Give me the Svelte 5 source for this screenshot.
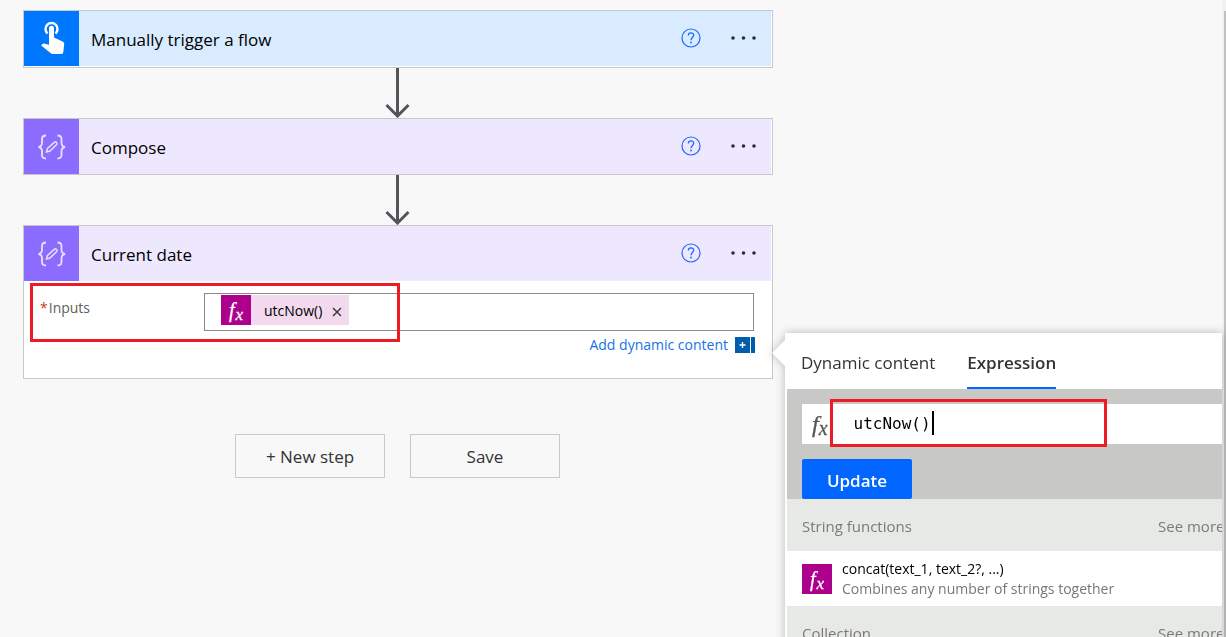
<script lang="ts">
  const steps = [
    { title: 'Manually trigger a flow', kind: 'trigger' },
    { title: 'Compose', kind: 'compose' },
    { title: 'Current date', kind: 'compose', open: true }
  ];

  const tabs = [
    { id: 'tab-dynamic', name: 'Dynamic content' },
    { id: 'tab-expression', name: 'Expression' }
  ];

  let tab = $state('tab-expression');
  let expression = $state('utcNow()');
  let token = $state('utcNow()');
</script>

{#snippet fx()}
  <span class="fx" aria-hidden="true">f<sub>x</sub></span>
{/snippet}

<div class="page">
  <main class="flow">
    {#each steps as step, i}
      {#if i > 0}
        <svg class="arrow" width="26" height="50" viewBox="0 0 26 50" aria-hidden="true">
          <path d="M12.500 0V48M1.500 37L12.500 48L23.500 37" fill="none" stroke="#54545a" stroke-width="3" />
        </svg>
      {/if}
      <section class="card" class:trigger={step.kind === 'trigger'}>
        <header>
          <span class="icon">
            {#if step.kind === 'trigger'}
              <svg width="26" height="36" viewBox="0 0 26 36" aria-hidden="true">
                <path d="M8.500 12.500A6 6 0 1 1 16.500 12.500" fill="none" stroke="#fff" stroke-width="2.400" />
                <path d="M12.500 4.800C14 4.800 15 6 15 7.300V16.500L23.500 20.500C24.900 21.200 25.300 22 25.200 23.500L24.300 31C24 32.500 23.400 33 22 33H14C13 33 12.200 32.700 11.500 32L2.200 24.500L3.200 23.200C3.900 22.500 4.800 22.500 5.700 22.700L10 23.800V7.300C10 6 11 4.800 12.500 4.800Z" fill="#fff" />
              </svg>
            {:else}
              <svg width="30" height="26" viewBox="0 0 30 26" fill="none" stroke="#e9e0ff" stroke-width="1.800" aria-hidden="true">
                <path d="M9 1.500C6 1.500 5 2.500 5 5V9C5 11.500 4 12.500 1.500 13C4 13.500 5 14.500 5 17V21C5 23.500 6 24.500 9 24.500" />
                <path d="M20.500 1.500C23.500 1.500 24.500 2.500 24.500 5V9C24.500 11.500 25.500 12.500 28 13C25.500 13.500 24.500 14.500 24.500 17V21C24.500 23.500 23.500 24.500 20.500 24.500" />
                <path d="M9.500 18L10.500 14.500L17.500 8.200C18.800 7.200 20.800 9 19.700 10.500L13 17L9.500 18Z" stroke-width="1.500" />
              </svg>
            {/if}
          </span>
          <h2>{step.title}</h2>
          <button class="help" aria-label="Help for {step.title}">
            <svg width="20" height="20" viewBox="0 0 20 20" fill="none" stroke="#2266ff" aria-hidden="true">
              <circle cx="10" cy="10" r="9" stroke-width="1.200" />
              <path d="M7.300 7.500C7.300 4 12.700 4 12.700 7.300C12.700 9.500 10 9.500 10 12.300" stroke-width="1.300" />
              <circle cx="10" cy="14.500" r=".9" fill="#2266ff" stroke="none" />
            </svg>
          </button>
          <button class="more" aria-label="More commands for {step.title}">
            <svg width="26" height="4" viewBox="0 0 26 4" fill="#2b2b33" aria-hidden="true">
              <circle cx="2" cy="2" r="1.800" /><circle cx="12.500" cy="2" r="1.800" /><circle cx="23" cy="2" r="1.800" />
            </svg>
          </button>
        </header>
        {#if step.open}
          <div class="body">
            <div class="field">
              <span class="label" id="inputs-label"><b>*</b>Inputs</span>
              <div class="box" role="group" aria-labelledby="inputs-label">
                {#if token}
                  <span class="token">
                    <span class="badge">{@render fx()}</span>
                    <span>{token}</span>
                    <button aria-label="Remove" onclick={() => (token = '')}>
                      <svg width="10" height="10" viewBox="0 0 10 10" aria-hidden="true">
                        <path d="M1 1L9 9M9 1L1 9" stroke="#333" stroke-width="1.400" />
                      </svg>
                    </button>
                  </span>
                {/if}
              </div>
            </div>
            <button class="add">
              Add dynamic content
              <svg width="20" height="16" viewBox="0 0 20 16" aria-hidden="true">
                <path d="M0 0H15V16H0ZM16 0H20V16H16Z" fill="#005dac" />
                <path d="M7.500 5V11M4.500 8H10.500" stroke="#fff" stroke-width="1.400" />
              </svg>
            </button>
            <div class="mark mark-inputs"></div>
          </div>
        {/if}
      </section>
    {/each}

    <div class="actions">
      <button>+ New step</button>
      <button>Save</button>
    </div>
  </main>

  <aside class="panel">
    <div class="tabs" role="tablist">
      {#each tabs as { id, name }}
        <button {id} role="tab" aria-selected={tab === id} class:active={tab === id} onclick={() => (tab = id)}>{name}</button>
      {/each}
    </div>
    <div class="editor">
      <div class="formula">
        {@render fx()}
        <div class="entry">
          <input aria-labelledby="tab-expression" spellcheck="false" bind:value={expression} />
          <span class="caret"></span>
        </div>
        <div class="mark mark-formula"></div>
      </div>
      <button class="update" onclick={() => (token = expression)}>Update</button>
    </div>
    <div class="group"><h3>String functions</h3><a href="#strings">See more</a></div>
    <button class="fn">
      <span class="badge">{@render fx()}</span>
      <span>
        <strong>concat(text_1, text_2?, ...)</strong>
        <small>Combines any number of strings together</small>
      </span>
    </button>
    <div class="group"><h3>Collection</h3><a href="#collection">See more</a></div>
  </aside>
  <div class="rail"><div class="thumb"></div></div>
</div>

<style>
  :global(body) { margin: 0; background: #f8f8f8; }

  .page {
    display: flex;
    align-items: flex-start;
    height: 100vh;
    overflow: hidden;
    font-family: "Open Sans", "Noto Sans", sans-serif;
    font-size: 17px;
    color: #000;
  }
  .page *, .page *::before { box-sizing: border-box; }

  button {
    padding: 0;
    border: 0;
    background: none;
    font: inherit;
    color: inherit;
    cursor: pointer;
  }
  h2, h3 { margin: 0; font: inherit; }
  svg { display: block; flex: none; }

  .flow {
    flex: 0 1 750px;
    min-width: 0;
    margin: 10px 0 0 23px;
  }
  .card {
    padding-right: 1px;
    background: #fff;
    border: 1px solid #c8c8c8;
  }
  .trigger { padding-bottom: 1px; }
  .card header {
    display: flex;
    align-items: center;
    height: 55px;
    padding-right: 14px;
    background: #eee8fe;
  }
  .trigger header { background: #d9ebff; }
  .icon {
    display: grid;
    place-items: center;
    flex: none;
    width: 55px;
    height: 55px;
    background: #8c6cff;
  }
  .trigger .icon { background: #0077ff; }
  h2 {
    flex: 1;
    padding: 2px 0 0 12px;
  }
  .help, .more { padding-bottom: 1px; }
  .more { margin-left: 30px; }
  .arrow { margin: 0 auto; }

  .body {
    position: relative;
    padding: 12px 17px 23px 16px;
    font-size: 14px;
  }
  .field { display: flex; }
  .label {
    flex: 0 0 164px;
    padding-top: 5px;
    color: #605e5c;
  }
  .label b {
    margin-right: 1px;
    font-weight: 400;
    color: #c8401e;
  }
  .box {
    flex: 1;
    height: 38px;
    padding: 1px 16px;
    border: 1px solid #8a8a8a;
  }
  .token {
    display: inline-flex;
    align-items: center;
    height: 30px;
    padding-right: 7px;
    background: #f2d9ee;
  }
  .token button {
    margin-left: 10px;
    padding-top: 3px;
  }
  .token .badge { margin-right: 13px; }
  .badge {
    display: grid;
    place-items: center;
    flex: none;
    width: 30px;
    height: 30px;
    background: #ad008c;
    color: #fff;
  }
  .fx {
    font: italic 20px/20px "Liberation Serif", serif;
    -webkit-text-stroke: 0.3px;
  }
  .fx sub {
    margin-left: 1px;
    font-size: 17px;
    line-height: 0;
    vertical-align: -3px;
  }
  .add {
    display: flex;
    align-items: center;
    gap: 7px;
    margin: 4px -1px 0 auto;
    line-height: 20px;
    color: #1473e6;
  }
  .mark {
    position: absolute;
    border: 3px solid #ed1c24;
    pointer-events: none;
  }
  .mark-inputs {
    top: 2px;
    left: 6px;
    width: 370px;
    height: 59px;
  }

  .actions {
    display: flex;
    justify-content: center;
    gap: 25px;
    margin-top: 55px;
    padding-right: 1px;
  }
  .actions button {
    width: 150px;
    height: 44px;
    border: 1px solid #cacaca;
    color: #333;
  }

  .panel {
    position: relative;
    flex: 1 0 420px;
    margin: 333px 0 0 12px;
    padding-left: 2px;
    background: #fff;
    filter: drop-shadow(0 0 5px rgba(0, 0, 0, 0.25));
    white-space: nowrap;
  }
  /* callout pointing back at the step */
  .panel::before {
    content: '';
    position: absolute;
    top: 6px;
    left: -13px;
    width: 14px;
    height: 28px;
    background: #fff;
    clip-path: polygon(100% 0, 0 50%, 100% 100%);
  }
  .tabs {
    display: flex;
    gap: 32px;
    height: 56px;
    padding-left: 14px;
    color: #333;
  }
  .tabs button {
    padding-top: 4px;
    border-bottom: 2px solid transparent;
  }
  .tabs .active {
    border-color: #0066ff;
    font-weight: 600;
  }
  .editor {
    padding: 15px 0 0 15px;
    background: #c8c8c6;
  }
  .formula {
    position: relative;
    display: flex;
    align-items: center;
    height: 40px;
    padding-left: 10px;
    background: #fff;
  }
  .formula .fx {
    font-size: 24px;
    color: #555;
  }
  .formula .fx sub {
    margin-left: 0;
    font-size: 20px;
  }
  .entry {
    display: flex;
    align-items: center;
    margin-left: 26px;
    padding-bottom: 2px;
  }
  .entry input {
    width: 78px;
    padding: 0;
    border: 0;
    outline: 0;
    background: none;
    font: 16px "DejaVu Sans Mono", monospace;
    color: #000;
  }
  .caret {
    width: 2px;
    height: 24px;
    background: #000;
  }
  .mark-formula {
    top: -5px;
    left: 28px;
    width: 277px;
    height: 48px;
  }
  .update {
    display: block;
    width: 110px;
    height: 40px;
    margin-top: 15px;
    padding-top: 3px;
    border-radius: 2px;
    background: #0066ff;
    color: #fff;
    font-weight: 600;
  }
  .group {
    display: flex;
    align-items: center;
    justify-content: space-between;
    height: 52px;
    padding: 1px 0 0 15px;
    overflow: hidden;
    background: #e7e9e6;
    font-size: 15px;
    color: #7a7a7a;
  }
  .group a {
    width: 64px;
    color: inherit;
    text-decoration: none;
  }
  .fn {
    display: flex;
    align-items: center;
    gap: 10px;
    height: 55px;
    padding: 1px 0 0 15px;
    text-align: left;
    font-size: 14px;
    line-height: 20px;
  }
  .fn strong, .fn small {
    display: block;
    font-size: 14px;
    font-weight: 400;
  }
  .fn small { color: #777; }

  .rail {
    align-self: stretch;
    flex: none;
    width: 4px;
    padding: 11px 0 0 2px;
    background: #f1f1f1;
  }
  .thumb {
    height: 100%;
    background: #c1c1c1;
  }
</style>
